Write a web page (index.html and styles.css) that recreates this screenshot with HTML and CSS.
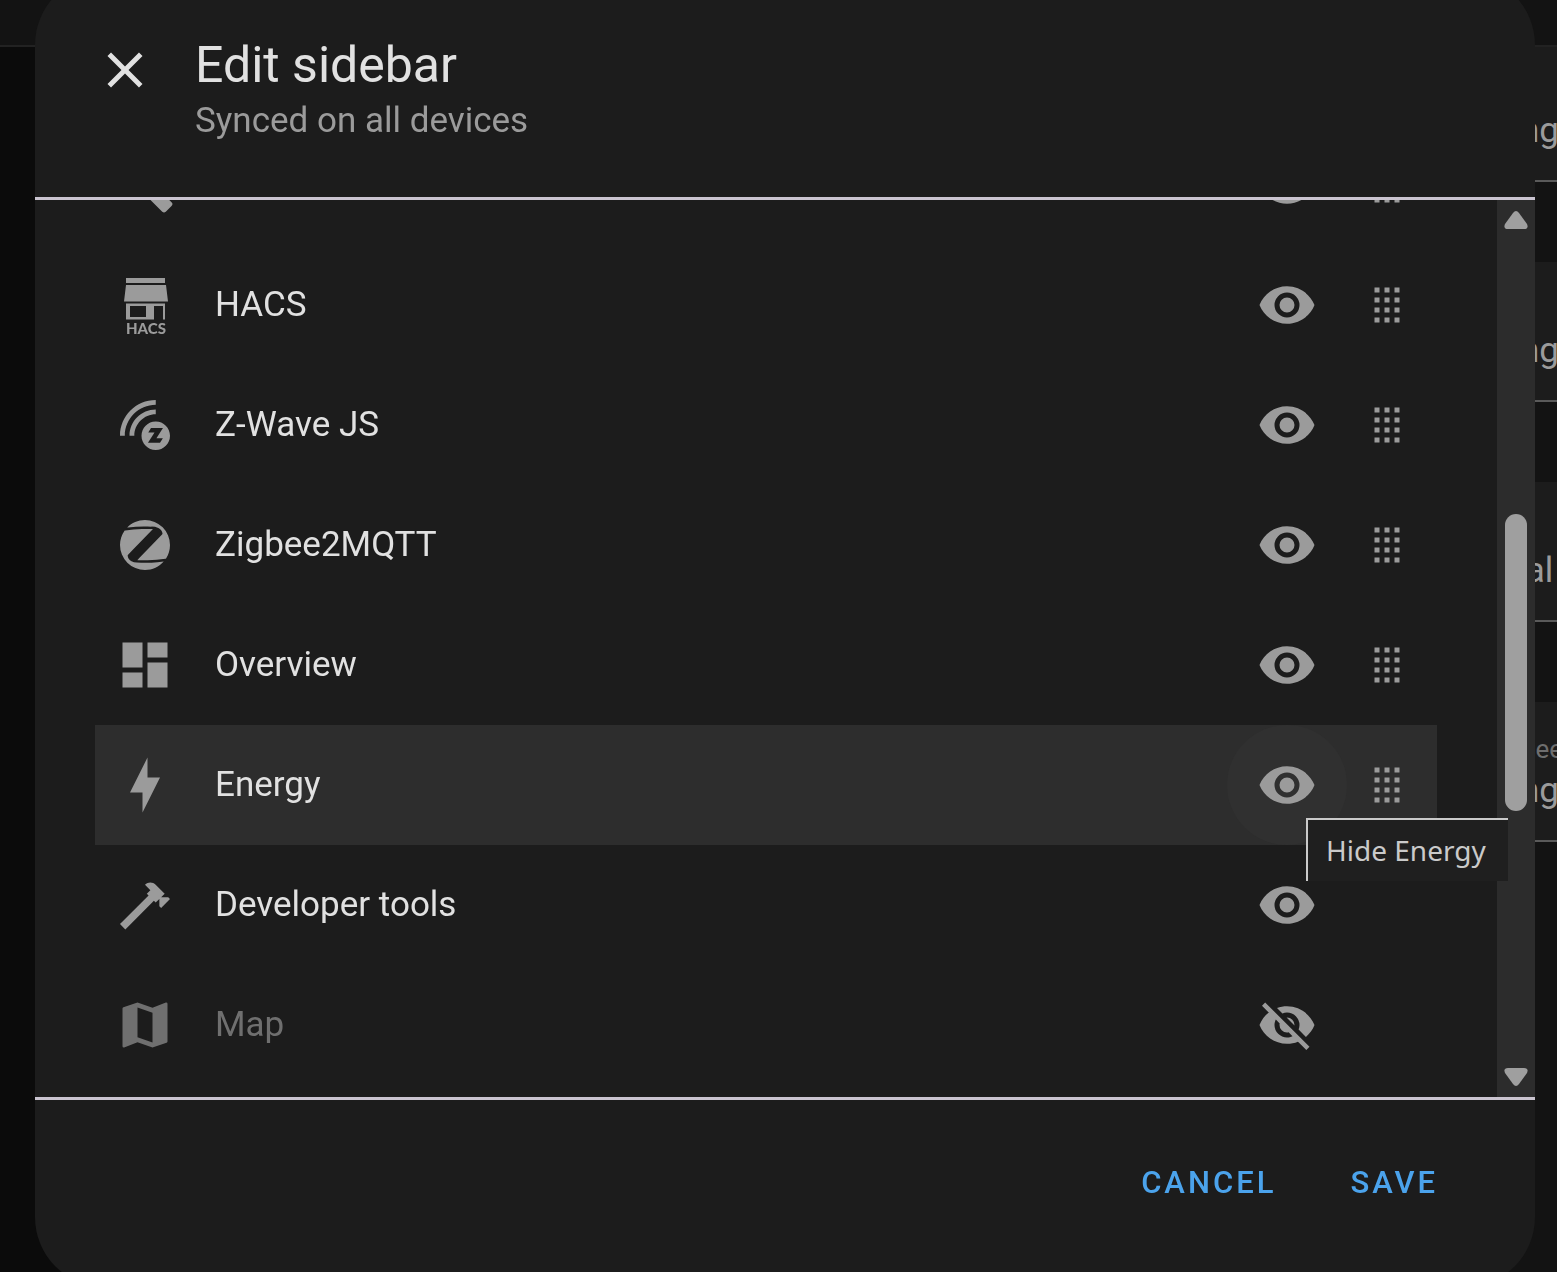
FILE: index.html
```html
<!DOCTYPE html>
<html lang="en">
<head>
  <meta charset="UTF-8" />
  <meta name="viewport" content="width=device-width, initial-scale=1.0" />
  <title>Edit sidebar</title>
  <link rel="stylesheet" href="styles.css">
</head>
<body>
  <svg class="sprite" aria-hidden="true">
    <symbol id="eye" viewBox="0 0 24 24"><path d="M12,9A3,3 0 0,0 9,12A3,3 0 0,0 12,15A3,3 0 0,0 15,12A3,3 0 0,0 12,9M12,17A5,5 0 0,1 7,12A5,5 0 0,1 12,7A5,5 0 0,1 17,12A5,5 0 0,1 12,17M12,4.5C7,4.5 2.73,7.61 1,12C2.73,16.39 7,19.5 12,19.5C17,19.5 21.27,16.39 23,12C21.27,7.61 17,4.5 12,4.5Z" /></symbol>
    <symbol id="eye-off" viewBox="0 0 24 24"><path d="M11.83,9L15,12.16C15,12.11 15,12.05 15,12A3,3 0 0,0 12,9C11.94,9 11.89,9 11.83,9M7.53,9.8L9.08,11.35C9.03,11.56 9,11.77 9,12A3,3 0 0,0 12,15C12.22,15 12.44,14.97 12.65,14.92L14.2,16.47C13.53,16.8 12.79,17 12,17A5,5 0 0,1 7,12C7,11.21 7.2,10.47 7.53,9.8M2,4.27L4.28,6.55L4.73,7C3.08,8.3 1.78,10 1,12C2.73,16.39 7,19.5 12,19.5C13.55,19.5 15.03,19.2 16.38,18.66L16.81,19.08L19.73,22L21,20.73L3.27,3M12,7A5,5 0 0,1 17,12C17,12.64 16.87,13.26 16.64,13.82L19.57,16.75C21.07,15.5 22.27,13.86 23,12C21.27,7.61 17,4.5 12,4.5C10.6,4.5 9.26,4.75 8,5.2L10.17,7.35C10.74,7.13 11.35,7 12,7Z" /></symbol>
    <symbol id="drag" viewBox="0 0 24 24"><path d="M7,5H9V7H7M11,5H13V7H11M15,5H17V7H15M7,9H9V11H7M11,9H13V11H11M15,9H17V11H15M7,13H9V15H7M11,13H13V15H11M15,13H17V15H15M7,17H9V19H7M11,17H13V19H11M15,17H17V19H15Z" /></symbol>
  </svg>

  <div class="page">
    <div class="topbar"></div>
    <div class="columns">
      <div class="drawer"></div>
      <div class="form">
        <div class="field"><span class="value">ng</span></div>
        <div class="field"><span class="value">ng</span></div>
        <div class="field"><span class="value">al</span></div>
        <div class="field"><span class="label">ee</span><span class="value">ng</span></div>
      </div>
    </div>
  </div>

  <div class="overlay">
    <div class="dialog" role="dialog" aria-labelledby="dialog-title">
      <header class="dialog-header">
        <button class="close" aria-label="Close">
          <svg class="icon" viewBox="0 0 24 24"><path d="M19,6.41L17.59,5L12,10.59L6.41,5L5,6.41L10.59,12L5,17.59L6.41,19L12,13.41L17.59,19L19,17.59L13.41,12L19,6.41Z" /></svg>
        </button>
        <div>
          <h1 class="title" id="dialog-title">Edit sidebar</h1>
          <p class="subtitle">Synced on all devices</p>
        </div>
      </header>

      <div class="dialog-body">
        <ul class="items">
          <li class="item">
            <svg class="icon" viewBox="0 0 24 24"><path d="M22.7,19L13.6,9.9C14.5,7.6 14,4.9 12.1,3C10.1,1 7.1,0.6 4.7,1.7L9,6L6,9L1.6,4.7C0.4,7.1 0.9,10.1 2.9,12.1C4.8,14 7.5,14.5 9.8,13.6L18.9,22.7C19.3,23.1 19.9,23.1 20.3,22.7L22.6,20.4C23.1,20 23.1,19.3 22.7,19Z" /></svg>
            <span class="name"></span>
            <button class="toggle" aria-label="Hide"><svg class="icon"><use href="#eye" /></svg></button>
            <svg class="icon handle"><use href="#drag" /></svg>
          </li>
          <li class="item">
            <svg class="icon" viewBox="0 0 60 60">
              <path fill-rule="evenodd" d="M11,3H50V8H11ZM11,10H51L53,26.500H9ZM11,28.500H50V44.500H48V31H39V44.500H11ZM15,31V42H31V31Z" />
              <text class="hacs-text" x="11" y="59">HACS</text>
            </svg>
            <span class="name">HACS</span>
            <button class="toggle" aria-label="Hide HACS"><svg class="icon"><use href="#eye" /></svg></button>
            <svg class="icon handle"><use href="#drag" /></svg>
          </li>
          <li class="item">
            <svg class="icon" viewBox="0 0 24 24"><path d="M16.3,10.58C13.14,10.58 10.6,13.13 10.6,16.28C10.6,19.43 13.15,22 16.3,22C19.45,22 22,19.43 22,16.28C22,13.13 19.45,10.58 16.3,10.58M18,19.08H13.19L15.81,15H13.31L14.4,13.23H19.18L16.57,17.31H19.15L18,19.08M16.3,3.93V2C8.41,2 2,8.42 2,16.31H3.92C3.94,9.46 9.5,3.93 16.3,3.93M16.3,7.74V5.82C10.5,5.82 5.81,10.53 5.81,16.31H7.73C7.75,11.58 11.59,7.74 16.3,7.74" /></svg>
            <span class="name">Z-Wave JS</span>
            <button class="toggle" aria-label="Hide Z-Wave JS"><svg class="icon"><use href="#eye" /></svg></button>
            <svg class="icon handle"><use href="#drag" /></svg>
          </li>
          <li class="item">
            <svg class="icon" viewBox="0 0 24 24"><path d="M4.06,6.15C3.97,6.17 3.88,6.22 3.8,6.28C2.66,7.9 2,9.87 2,12A10,10 0 0,0 12,22C15,22 17.68,20.68 19.5,18.6L17,18.85C14.25,19.15 11.45,19.19 8.66,18.96C7.95,18.94 7.24,18.76 6.59,18.45C5.73,18.06 5.15,17.23 5.07,16.29C5.06,16.13 5.12,16 5.23,15.87L7.42,13.6L15.1,5.7V5.6H10.84C8.57,5.64 6.31,5.82 4.06,6.15M20.17,17.5C20.26,17.47 20.35,17.44 20.43,17.39C21.42,15.83 22,14 22,12A10,10 0 0,0 12,2C9.22,2 6.7,3.13 4.89,4.97H5.17C8.28,4.57 11.43,4.47 14.56,4.65C15.5,4.64 16.45,4.82 17.33,5.17C18.25,5.53 18.89,6.38 19,7.37C19,7.53 18.93,7.7 18.82,7.82L9.71,17.19L9,17.95V18.06H13.14C15.5,18 17.84,17.81 20.17,17.5Z" /></svg>
            <span class="name">Zigbee2MQTT</span>
            <button class="toggle" aria-label="Hide Zigbee2MQTT"><svg class="icon"><use href="#eye" /></svg></button>
            <svg class="icon handle"><use href="#drag" /></svg>
          </li>
          <li class="item">
            <svg class="icon" viewBox="0 0 24 24"><path d="M13,3V9H21V3M13,21H21V11H13M3,21H11V15H3M3,13H11V3H3V13Z" /></svg>
            <span class="name">Overview</span>
            <button class="toggle" aria-label="Hide Overview"><svg class="icon"><use href="#eye" /></svg></button>
            <svg class="icon handle"><use href="#drag" /></svg>
          </li>
          <li class="item active">
            <svg class="icon" viewBox="0 0 24 24"><path d="M11 15H6L13 1V9H18L11 23V15Z" /></svg>
            <span class="name">Energy</span>
            <button class="toggle" aria-describedby="tip"><svg class="icon"><use href="#eye" /></svg><span class="tooltip" id="tip" role="tooltip">Hide Energy</span></button>
            <svg class="icon handle"><use href="#drag" /></svg>
          </li>
          <li class="item">
            <svg class="icon" viewBox="0 0 24 24"><path d="M2,19.63L13.43,8.2L12.72,7.5L14.14,6.07L12,3.89C13.2,2.7 15.09,2.7 16.27,3.89L19.87,7.5L18.45,8.91H21.29L22,9.62L18.45,13.21L17.74,12.5V9.62L16.27,11.04L15.56,10.33L4.13,21.76L2,19.63Z" /></svg>
            <span class="name">Developer tools</span>
            <button class="toggle" aria-label="Hide Developer tools"><svg class="icon"><use href="#eye" /></svg></button>
          </li>
          <li class="item off">
            <svg class="icon" viewBox="0 0 24 24"><path d="M15,19L9,16.89V5L15,7.11M20.5,3C20.44,3 20.39,3 20.34,3L15,5.1L9,3L3.36,4.9C3.15,4.97 3,5.15 3,5.38V20.5A0.5,0.5 0 0,0 3.5,21C3.55,21 3.61,21 3.66,20.97L9,18.9L15,21L20.64,19.1C20.85,19 21,18.85 21,18.62V3.5A0.5,0.5 0 0,0 20.5,3Z" /></svg>
            <span class="name">Map</span>
            <button class="toggle" aria-label="Show Map"><svg class="icon"><use href="#eye-off" /></svg></button>
          </li>
        </ul>

        <div class="scrollbar">
          <svg class="arrow" viewBox="0 0 24 18"><path d="M9,2Q12,-2 15,2L23,13Q25,18 20,18H4Q-1,18 1,13Z" /></svg>
          <div class="track"><div class="thumb"></div></div>
          <svg class="arrow" viewBox="0 0 24 18"><path d="M9,16Q12,20 15,16L23,5Q25,0 20,0H4Q-1,0 1,5Z" /></svg>
        </div>
      </div>

      <footer class="dialog-footer">
        <button class="action">CANCEL</button>
        <button class="action">SAVE</button>
      </footer>
    </div>
  </div>
</body>
</html>
```

FILE: styles.css
```css
* {
  box-sizing: border-box;
}

body {
  margin: 0;
  height: 100vh;
  overflow: hidden;
  background: #131313;
  font-family: Roboto, sans-serif;
  font-size: 35px;
  color: #e1e1e1;
}

button {
  padding: 0;
  border: none;
  background: none;
  color: inherit;
  font: inherit;
  cursor: pointer;
}

.sprite {
  display: none;
}

.icon {
  display: block;
  width: 60px;
  height: 60px;
  fill: currentColor;
}

/* page behind the dialog */
.page {
  display: flex;
  flex-direction: column;
  height: 100%;
  overflow: hidden;
}

.topbar {
  height: 47px;
  flex: none;
  border-bottom: 2px solid #222;
}

.columns {
  display: flex;
  flex: 1;
  justify-content: space-between;
}

.drawer {
  width: 140px;
  background: #0b0b0b;
}

.form {
  display: flex;
  flex-direction: column;
  gap: 80px;
  width: 47px;
  margin-right: -6px;
}

.field {
  display: flex;
  flex-direction: column;
  justify-content: flex-end;
  height: 140px;
  padding-bottom: 29px;
  border-bottom: 2px solid #5a5a5a;
  background: #1c1c1c;
  color: #9b9b9b;
  line-height: 40px;
}

/* the top of the first field is under the bar */
.field:first-child {
  height: 135px;
}

.field .value {
  text-align: center;
}

.field .label {
  font-size: 26px;
  line-height: 44px;
  text-align: right;
  color: #6e6e6e;
}

/* dialog */
.overlay {
  position: fixed;
  inset: -25px 22px -15px 35px;
  display: flex;
}

.dialog {
  display: flex;
  flex: 1;
  flex-direction: column;
  border-radius: 70px;
  background: #1c1c1c;
}

.dialog-header {
  display: flex;
  align-items: flex-start;
  gap: 40px;
  height: 222px;
  padding: 60px 60px 0;
}

.close {
  margin-top: 5px;
}

.title {
  margin: 0;
  font-size: 50px;
  font-weight: 400;
  line-height: 60px;
}

.subtitle {
  margin: 0;
  line-height: 52px;
  color: #9b9b9b;
}

.dialog-body {
  display: flex;
  flex: 1;
  min-height: 0;
  overflow: hidden;
  border-top: 3px solid #cac4d0;
  border-bottom: 3px solid #cac4d0;
}

/* scrolled part way down */
.items {
  flex: 1;
  margin: -75px 0 0;
  padding: 0 60px;
  list-style: none;
}

.item {
  display: grid;
  grid-template-columns: 60px 1fr 120px 60px;
  column-gap: 10px;
  align-items: center;
  height: 120px;
  padding: 0 20px;
}

.item .icon {
  color: #9b9b9b;
}

.item .name {
  padding: 0 0 2px 30px;
}

.item.active {
  background: #2d2d2d;
}

.item.off .name,
.item.off > .icon {
  color: #6f6f6f;
}

.hacs-text {
  font-family: Lato, sans-serif;
  font-size: 15px;
  font-weight: 900;
}

.toggle {
  position: relative;
  display: grid;
  place-items: center;
  height: 120px;
  border-radius: 50%;
}

.active .toggle {
  background: #303030;
}

.handle {
  cursor: grab;
}

.tooltip {
  position: absolute;
  left: 79px;
  top: 93px;
  z-index: 1;
  padding: 10px 22px 11px 18px;
  border-top: 2px solid #cacaca;
  border-left: 2px solid #cacaca;
  background: #1f1f1f;
  color: #cacaca;
  font-family: "Noto Sans", sans-serif;
  font-size: 28px;
  line-height: 40px;
  white-space: nowrap;
}

.scrollbar {
  display: flex;
  flex-direction: column;
  align-items: center;
  width: 38px;
  padding: 11px 0;
  background: #2c2c2c;
}

.arrow {
  width: 24px;
  height: 18px;
  fill: #9f9f9f;
}

.track {
  flex: 1;
  width: 22px;
  padding-top: 285px;
}

.thumb {
  height: 297px;
  border-radius: 11px;
  background: #9f9f9f;
}

.dialog-footer {
  display: flex;
  justify-content: flex-end;
  align-items: flex-start;
  gap: 34px;
  height: 187px;
  padding: 37px 77px 0;
}

.action {
  height: 90px;
  padding: 0 20px;
  color: #4ba3ec;
  font-size: 31px;
  font-weight: 500;
  letter-spacing: 3px;
}
```
